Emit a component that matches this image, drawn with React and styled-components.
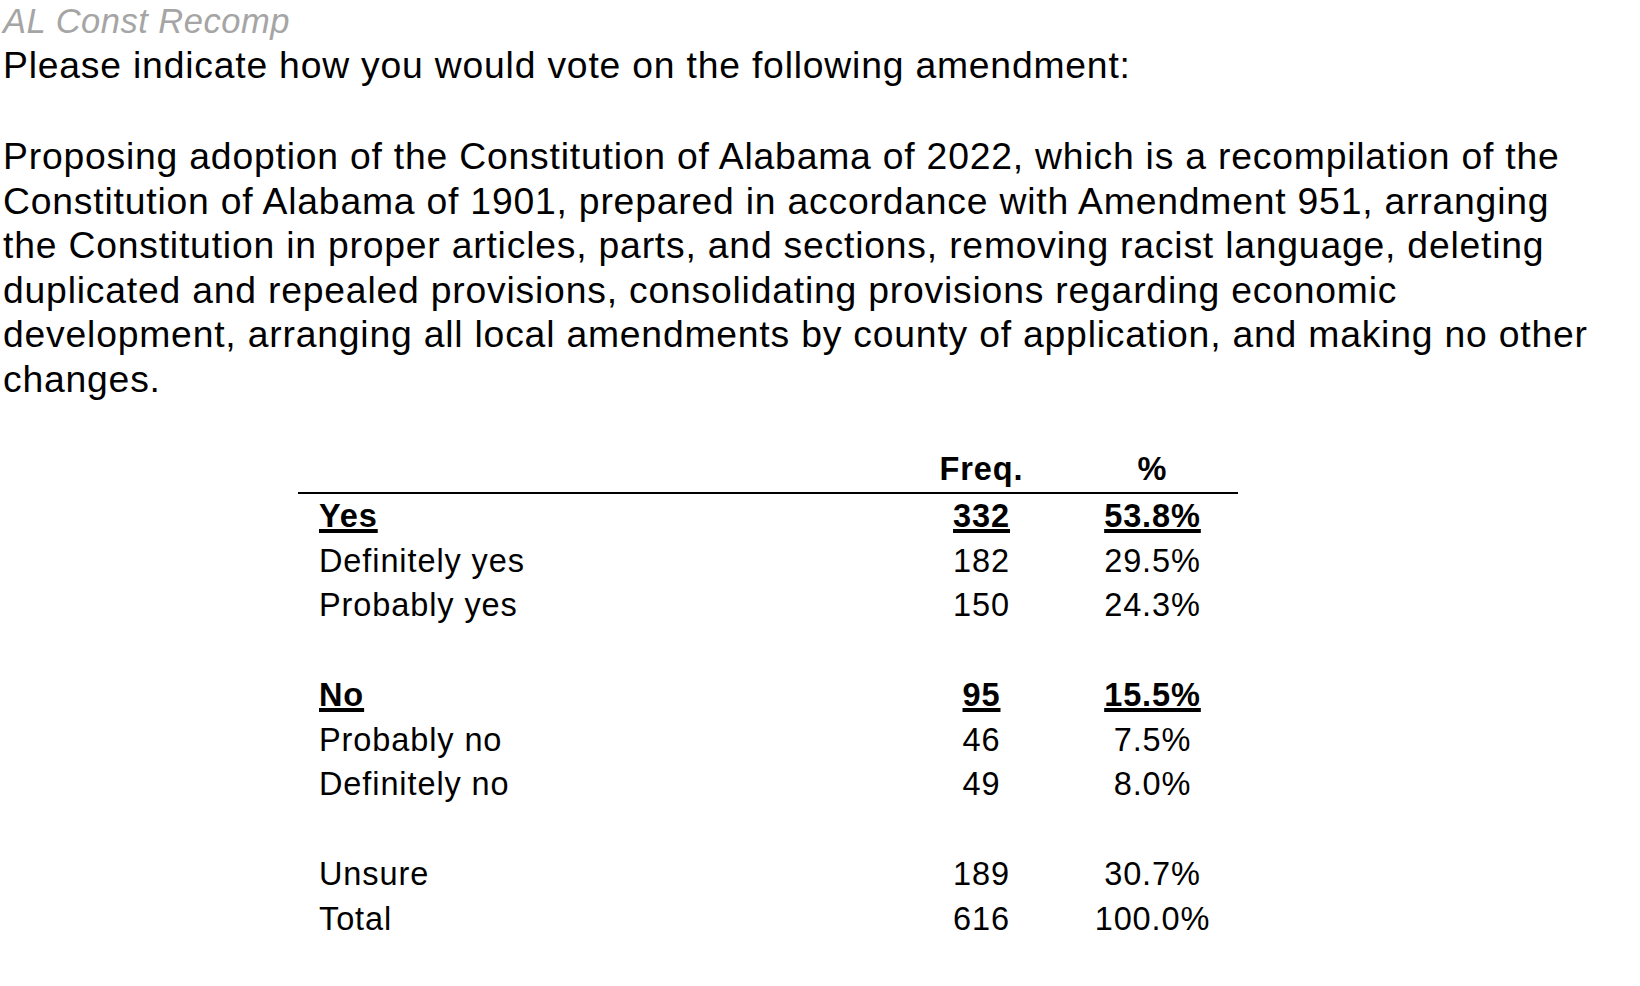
import styled, { createGlobalStyle } from "styled-components";

const GlobalStyle = createGlobalStyle`
	body {
		margin: 0;
		background: #ffffff;
		color: #000000;
		font-family: "Liberation Sans", Arial, sans-serif;
	}
`;

const QUESTION = "Please indicate how you would vote on the following amendment:";
const WORDING = [
	"Proposing adoption of the Constitution of Alabama of 2022, which is a recompilation of the",
	"Constitution of Alabama of 1901, prepared in accordance with Amendment 951, arranging",
	"the Constitution in proper articles, parts, and sections, removing racist language, deleting",
	"duplicated and repealed provisions, consolidating provisions regarding economic",
	"development, arranging all local amendments by county of application, and making no other",
	"changes.",
];

// null = empty spacer row
const ROWS = [
	{ label: "Yes", freq: "332", pct: "53.8%", net: true },
	{ label: "Definitely yes", freq: "182", pct: "29.5%" },
	{ label: "Probably yes", freq: "150", pct: "24.3%" },
	null,
	{ label: "No", freq: "95", pct: "15.5%", net: true },
	{ label: "Probably no", freq: "46", pct: "7.5%" },
	{ label: "Definitely no", freq: "49", pct: "8.0%" },
	null,
	{ label: "Unsure", freq: "189", pct: "30.7%" },
	{ label: "Total", freq: "616", pct: "100.0%" },
];

const App = () => {
	return (
		<>
			<GlobalStyle />
			<Page>
				<Title>AL Const Recomp</Title>
				<Question>{QUESTION}</Question>
				<Wording>
					{WORDING.map((line, i) => (
						<Line key={`line-${i}`}>{line}</Line>
					))}
				</Wording>
				<Table>
					<HeadRow>
						<Cell />
						<NumCell bold>Freq.</NumCell>
						<NumCell bold>%</NumCell>
					</HeadRow>
					{ROWS.map((row, i) =>
						row ? (
							<Row key={`row-${i}`}>
								<Cell>
									<Text net={row.net}>{row.label}</Text>
								</Cell>
								<NumCell>
									<Text net={row.net}>{row.freq}</Text>
								</NumCell>
								<NumCell>
									<Text net={row.net}>{row.pct}</Text>
								</NumCell>
							</Row>
						) : (
							<Spacer key={`row-${i}`} />
						)
					)}
				</Table>
			</Page>
		</>
	);
};

const Page = styled.div`
	padding: 0 0 40px 3px;
`;
const Title = styled.div`
	font-size: 34.5px;
	line-height: 42px;
	font-style: italic;
	letter-spacing: 0.5px;
	color: #a5a5a5;
`;
const Question = styled.div`
	margin-top: 0.5px;
	font-size: 37.3px;
	line-height: 44.6px;
	letter-spacing: 0.8px;
	white-space: nowrap;
`;
const Wording = styled.div`
	margin-top: 47px;
	font-size: 37.3px;
	line-height: 44.6px;
	letter-spacing: 0.8px;
`;
const Line = styled.div`
	white-space: nowrap;
`;
const Table = styled.div`
	margin: 45.5px 0 0 295px;
	width: 940px;
	font-size: 32.5px;
	line-height: 44.75px;
	letter-spacing: 0.9px;
`;
const Row = styled.div`
	display: grid;
	grid-template-columns: 598px 171px 171px;
	height: 44.75px;
`;
const HeadRow = styled(Row)`
	border-bottom: 2px solid #000;
`;
const Spacer = styled.div`
	height: 44.75px;
`;
const Cell = styled.div`
	padding-left: 21px;
	white-space: nowrap;
`;
const NumCell = styled.div`
	text-align: center;
	white-space: nowrap;
	font-weight: ${(p) => (p.bold ? 700 : 400)};
`;
const Text = styled.span`
	font-weight: ${(p) => (p.net ? 700 : 400)};
	text-decoration: ${(p) => (p.net ? "underline" : "none")};
	text-decoration-thickness: 4px;
	text-underline-offset: 2px;
`;

export default App;
